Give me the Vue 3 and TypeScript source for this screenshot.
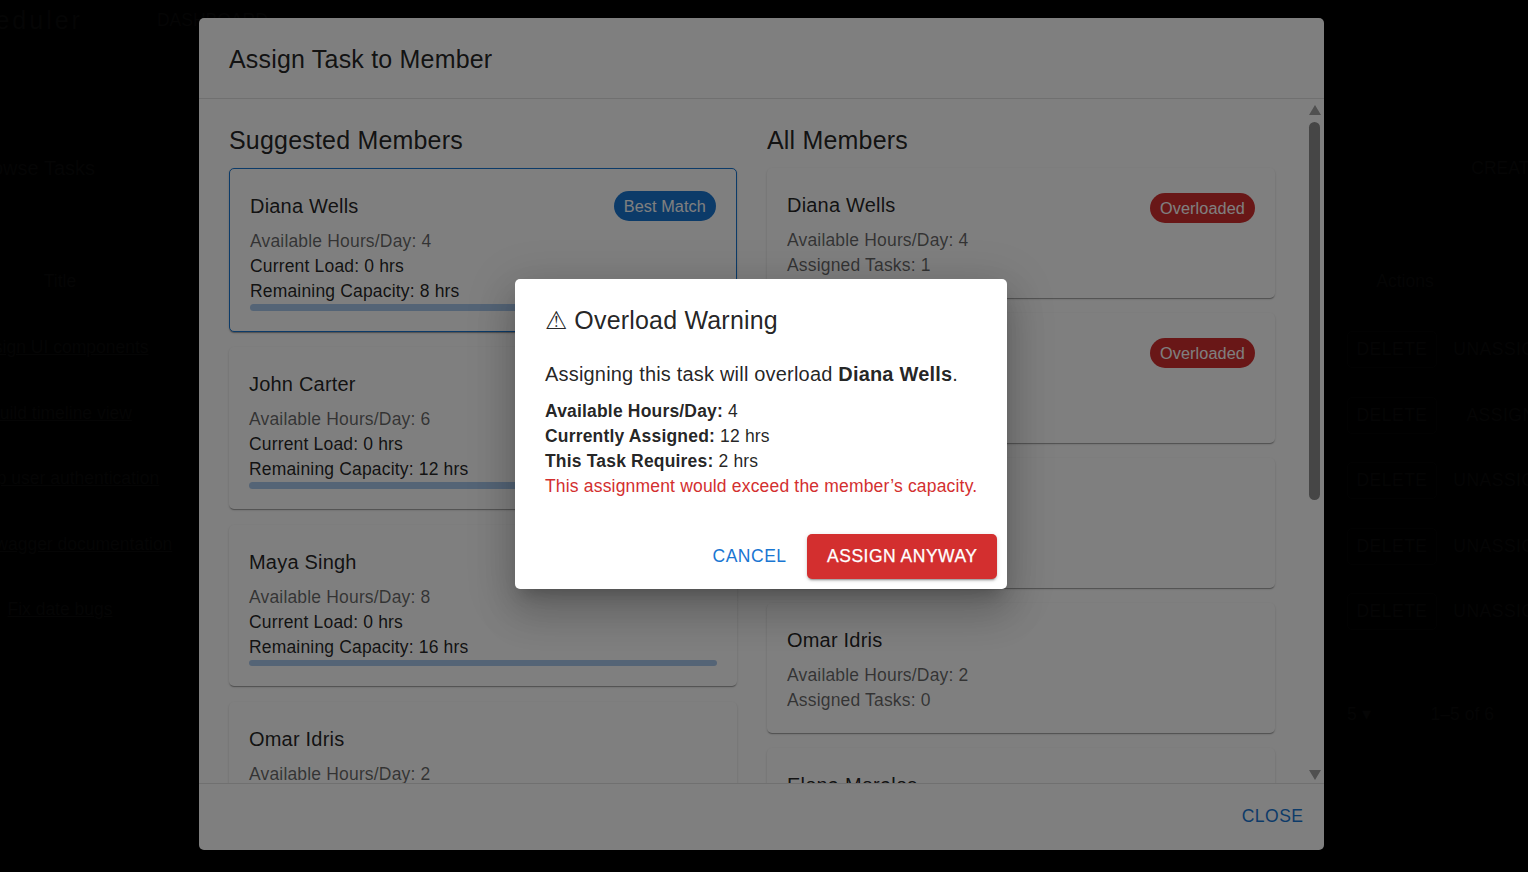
<script setup lang="ts">
interface SuggestedMember {
  name: string
  hours: number
  load: number
  remaining: number
  best?: boolean
}

interface Member {
  name: string
  hours: number
  tasks: number
  overloaded?: boolean
}

const suggested: SuggestedMember[] = [
  { name: 'Diana Wells', hours: 4, load: 0, remaining: 8, best: true },
  { name: 'John Carter', hours: 6, load: 0, remaining: 12 },
  { name: 'Maya Singh', hours: 8, load: 0, remaining: 16 },
  { name: 'Omar Idris', hours: 2, load: 0, remaining: 4 },
]

const members: Member[] = [
  { name: 'Diana Wells', hours: 4, tasks: 1, overloaded: true },
  { name: 'John Carter', hours: 6, tasks: 2, overloaded: true },
  { name: 'Maya Singh', hours: 8, tasks: 0 },
  { name: 'Omar Idris', hours: 2, tasks: 0 },
  { name: 'Elena Morales', hours: 5, tasks: 0 },
]

const tasks = [
  { title: 'Design UI components', action: 'UNASSIGN' },
  { title: 'Build timeline view', action: 'ASSIGN' },
  { title: 'Setup user authentication', action: 'UNASSIGN' },
  { title: 'Add Swagger documentation', action: 'UNASSIGN' },
  { title: 'Fix date bugs', action: 'UNASSIGN' },
]
</script>

<template>
  <div class="page">
    <div class="bg">
      <div class="bg-top"><span class="bg-brand">Task Scheduler</span><span>DASHBOARD</span></div>
      <div class="bg-head"><span class="bg-h">Browse Tasks</span><span>CREATE</span></div>
      <div class="bg-grid bg-cols"><span>Title</span><span></span><span class="bg-actions">Actions</span><span></span></div>
      <div v-for="t in tasks" :key="t.title" class="bg-grid bg-row">
        <u>{{ t.title }}</u>
        <span></span>
        <span class="bg-btn bg-del">DELETE</span>
        <span class="bg-btn bg-act">{{ t.action }}</span>
      </div>
      <div class="bg-foot"><span>5 &#9662;</span><span>1–5 of 6</span></div>
    </div>

    <div class="dialog">
      <h2 class="dialog-title">Assign Task to Member</h2>
      <div class="dialog-body">
        <div class="scroll">
          <div class="col">
            <h3 class="col-title">Suggested Members</h3>
            <div class="list">
              <div v-for="m in suggested" :key="m.name" class="card" :class="{ best: m.best }">
                <div class="card-top">
                  <div class="name">{{ m.name }}</div>
                  <span v-if="m.best" class="chip chip-blue">Best Match</span>
                </div>
                <div class="muted">Available Hours/Day: {{ m.hours }}</div>
                <div class="line">Current Load: {{ m.load }} hrs</div>
                <div class="line">Remaining Capacity: {{ m.remaining }} hrs</div>
                <div class="bar"></div>
              </div>
            </div>
          </div>
          <div class="col">
            <h3 class="col-title">All Members</h3>
            <div class="list list-all">
              <div v-for="m in members" :key="m.name" class="card">
                <div class="card-top">
                  <div class="name">{{ m.name }}</div>
                  <span v-if="m.overloaded" class="chip chip-red">Overloaded</span>
                </div>
                <div class="muted">Available Hours/Day: {{ m.hours }}</div>
                <div class="muted">Assigned Tasks: {{ m.tasks }}</div>
              </div>
            </div>
          </div>
        </div>
        <div class="scrollbar">
          <span class="arrow arrow-up"></span>
          <span class="track"><span class="thumb"></span></span>
          <span class="arrow arrow-down"></span>
        </div>
      </div>
      <div class="dialog-foot">
        <button class="btn btn-text">CLOSE</button>
      </div>
    </div>

    <div class="scrim">
      <div class="warn">
        <h2 class="warn-title">⚠ Overload Warning</h2>
        <div class="warn-body">
          <p class="warn-lead">Assigning this task will overload <b>Diana Wells</b>.</p>
          <div class="line"><b>Available Hours/Day:</b> 4</div>
          <div class="line"><b>Currently Assigned:</b> 12 hrs</div>
          <div class="line"><b>This Task Requires:</b> 2 hrs</div>
          <div class="line danger">This assignment would exceed the member’s capacity.</div>
        </div>
        <div class="warn-actions">
          <button class="btn btn-text">CANCEL</button>
          <button class="btn btn-red">ASSIGN ANYWAY</button>
        </div>
      </div>
    </div>
  </div>
</template>

<style scoped>
.page {
  position: relative;
  width: 1528px;
  height: 872px;
  overflow: hidden;
  background: #000;
  font-family: "Liberation Sans", Arial, sans-serif;
  color: rgba(0, 0, 0, 0.87);
}

/* the page behind the two dialogs, barely visible through the backdrops */
.bg {
  position: absolute;
  top: 0;
  left: -60px;
  width: 1633px;
  color: #0a0a0a;
  font-size: 17.5px;
  line-height: 25px;
}

.bg-top {
  display: flex;
  align-items: center;
  gap: 74px;
  height: 40px;
  margin-left: -70px;
}

.bg-brand {
  font-size: 25px;
  letter-spacing: 3px;
}

.bg-head {
  display: flex;
  justify-content: space-between;
  align-items: center;
  height: 40px;
  margin: 108px 32px 0 32px;
}

.bg-h {
  font-size: 20px;
}

.bg-grid {
  display: grid;
  grid-template-columns: 240px 1fr 90px 136px;
  align-items: center;
  text-align: center;
  white-space: nowrap;
}

.bg-cols {
  height: 67px;
  margin-top: 60px;
}

.bg-actions {
  padding-left: 26px;
}

.bg-row {
  height: 65.5px;
}

.bg-btn {
  margin-top: 4px;
  letter-spacing: 0.5px;
}

.bg-del {
  padding: 5px 0;
  border: 1px solid #050505;
  border-radius: 5px;
}

.bg-act {
  padding-right: 8px;
}

.bg-foot {
  display: flex;
  gap: 60px;
  margin: 54px 0 0 1407px;
  height: 36px;
  align-items: center;
}

.dialog {
  position: absolute;
  left: 199px;
  top: 18px;
  width: 1125px;
  height: 832px;
  display: flex;
  flex-direction: column;
  background: #fff;
  border-radius: 5px;
  overflow: hidden;
}

.dialog-title {
  margin: 0;
  padding: 21px 30px 19px;
  font-size: 25px;
  font-weight: 400;
  line-height: 40px;
  letter-spacing: 0.19px;
  border-bottom: 1px solid rgba(0, 0, 0, 0.12);
  flex: none;
}

.dialog-body {
  flex: 1;
  min-height: 0;
  display: flex;
}

.scroll {
  flex: 1;
  min-width: 0;
  overflow: hidden;
  display: grid;
  grid-template-columns: 1fr 1fr;
  gap: 30px;
  padding: 20.5px 30px 0;
}

.col-title {
  margin: 0 0 8.5px;
  font-size: 25px;
  font-weight: 400;
  line-height: 40px;
  letter-spacing: 0.19px;
}

.list {
  display: flex;
  flex-direction: column;
  gap: 15.8px;
}

.list-all {
  gap: 15.1px;
}

.card {
  flex: none;
  padding: 20px;
  border-radius: 5px;
  background: #fff;
  box-shadow: 0 2px 1px -1px rgba(0, 0, 0, 0.2), 0 1px 1px 0 rgba(0, 0, 0, 0.14), 0 1px 3px 0 rgba(0, 0, 0, 0.12);
}

.card.best {
  border: 1px solid #1976d2;
}

.card-top {
  display: flex;
  justify-content: space-between;
  align-items: flex-start;
  height: 33px;
  margin-bottom: 7px;
}

.name {
  padding-top: 1px;
  font-size: 20px;
  line-height: 32px;
  letter-spacing: 0.2px;
}

.muted,
.line {
  font-size: 17.5px;
  line-height: 25px;
  letter-spacing: 0.17px;
}

.muted {
  color: rgba(0, 0, 0, 0.6);
}

.bar {
  height: 6.5px;
  border-radius: 4px;
  background: #a9c8ec;
}

.chip {
  font-size: 16.25px;
  line-height: 30px;
  height: 30px;
  padding: 0 10px;
  border-radius: 15px;
  color: #fff;
  letter-spacing: 0.1px;
}

.chip-blue {
  background: #1976d2;
  margin-top: 2px;
}

.chip-red {
  background: #d32f2f;
  margin-top: 5px;
}

.scrollbar {
  flex: none;
  width: 19px;
  display: flex;
  flex-direction: column;
  align-items: center;
  padding-top: 6px;
}

.arrow {
  flex: none;
  width: 0;
  height: 0;
  border-left: 6.5px solid transparent;
  border-right: 6.5px solid transparent;
}

.arrow-up {
  border-bottom: 10px solid #a0a0a0;
}

.arrow-down {
  border-top: 10px solid #a0a0a0;
  margin-bottom: 3px;
}

.track {
  flex: 1;
  width: 11px;
  margin: 7px 0;
}

.thumb {
  display: block;
  height: 378px;
  border-radius: 6px;
  background: #8c8c8c;
}

.dialog-foot {
  flex: none;
  display: flex;
  justify-content: flex-end;
  padding: 10px 10.5px 11px;
  border-top: 1px solid rgba(0, 0, 0, 0.12);
}

.btn {
  border: 0;
  height: 45px;
  padding: 0 10px;
  border-radius: 5px;
  background: transparent;
  color: #1976d2;
  font-family: inherit;
  font-size: 17.5px;
  letter-spacing: 0.5px;
  cursor: pointer;
}

.btn-red {
  padding: 0 19.5px 0 20.5px;
  background: #d32f2f;
  color: #fff;
  font-weight: 500;
  -webkit-text-stroke: 0.25px #fff;
  box-shadow: 0 3px 1px -2px rgba(0, 0, 0, 0.2), 0 2px 2px 0 rgba(0, 0, 0, 0.14), 0 1px 5px 0 rgba(0, 0, 0, 0.12);
}

.scrim {
  position: absolute;
  inset: 0;
  background: rgba(0, 0, 0, 0.5);
}

.warn {
  position: absolute;
  left: 515px;
  top: 279px;
  width: 492px;
  height: 310px;
  display: flex;
  flex-direction: column;
  background: #fff;
  border-radius: 5px;
  box-shadow: 0 11px 15px -7px rgba(0, 0, 0, 0.2), 0 24px 38px 3px rgba(0, 0, 0, 0.14), 0 9px 46px 8px rgba(0, 0, 0, 0.12);
}

.warn-title {
  margin: 0;
  padding: 21px 30px 19px;
  font-size: 25px;
  font-weight: 400;
  line-height: 40px;
  letter-spacing: 0.19px;
  white-space: nowrap;
}

.warn-body {
  flex: 1;
  padding: 0 30px;
}

.warn-body .line {
  letter-spacing: 0.18px;
}

.warn-lead {
  margin: 0 0 10px;
  font-size: 20px;
  line-height: 30px;
  letter-spacing: 0.19px;
}

.danger {
  color: #d32f2f;
  white-space: nowrap;
}

.warn-actions {
  display: flex;
  justify-content: flex-end;
  gap: 10px;
  padding: 10px;
}
</style>
